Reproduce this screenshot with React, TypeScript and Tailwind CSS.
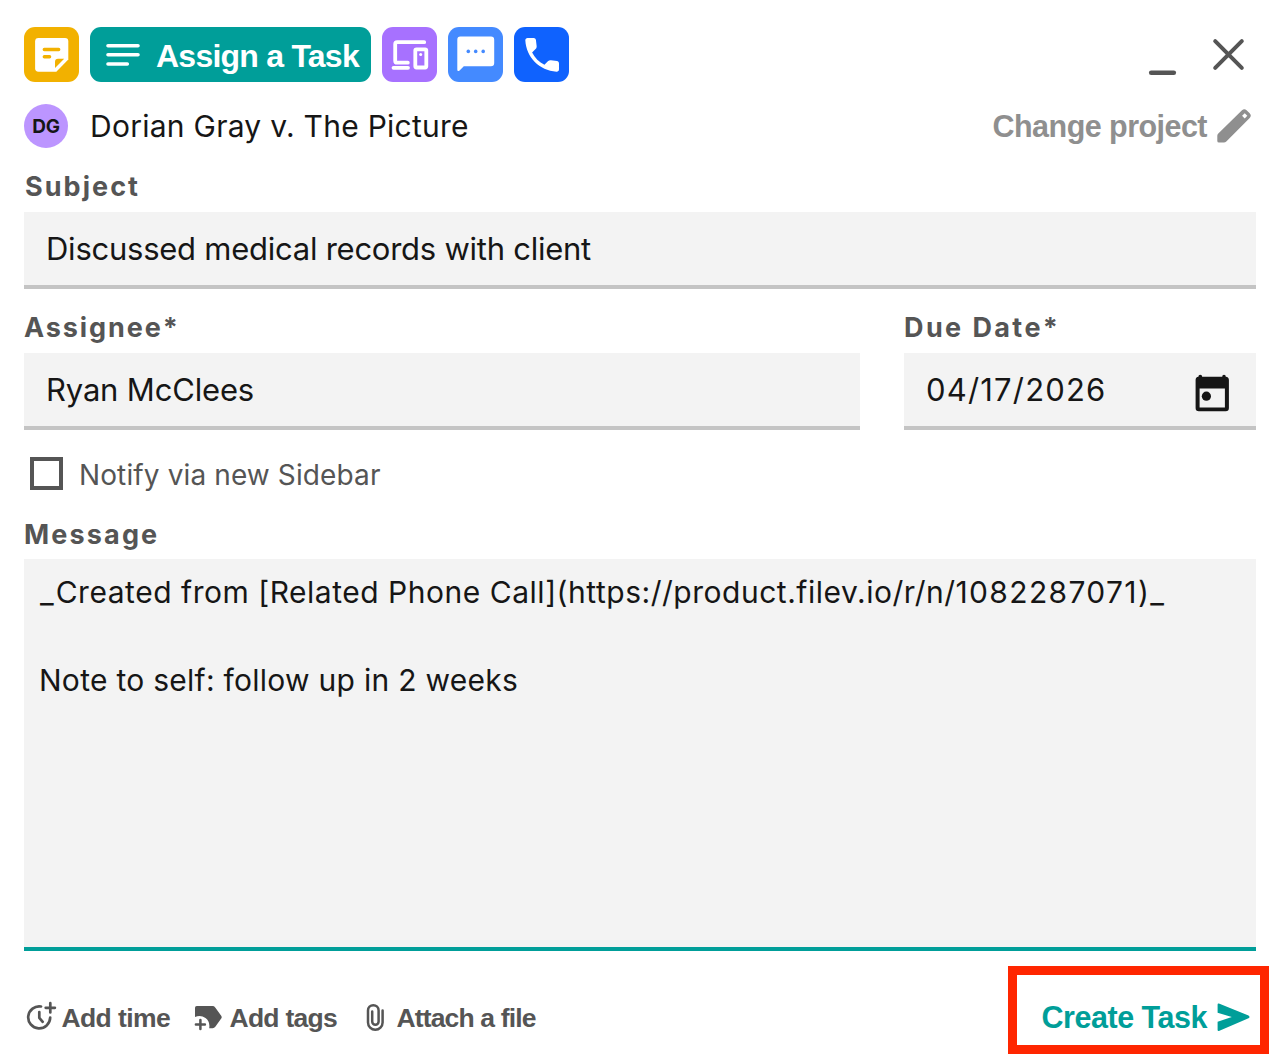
import React from 'react';

function NoteIcon() {
  return (
    <svg width="55" height="55" viewBox="0 0 55 55" fill="none">
      <path d="M14.5 11H41q3.3 0 3.3 3.3V32.5L32.3 44.7H14.5q-3.4 0-3.4-3.4V14.4q0-3.4 3.4-3.4Z" fill="#fff" />
      <path d="M20.3 22.5H34.7M20.3 29.8H25.6" stroke="#f2b100" strokeWidth="3.4" strokeLinecap="round" />
      <path d="M34 31.8H40.2L31 41V34.8q0-3 3-3Z" fill="#f2b100" />
    </svg>
  );
}

function DevicesIcon() {
  return (
    <svg width="55" height="55" viewBox="0 0 55 55" fill="none" stroke="#fff" strokeWidth="3.8" strokeLinecap="round" strokeLinejoin="round">
      <path d="M42.2 15.2H15.2q-2 0-2 2V33.7q0 2 2 2H25.8M11.5 40.8H26" />
      <rect x="33.3" y="22.3" width="11" height="18.2" rx="1.2" />
      <circle cx="38.7" cy="27.4" r="1.5" fill="#fff" stroke="none" />
    </svg>
  );
}

function ChatIcon() {
  return (
    <svg width="55" height="55" viewBox="0 0 55 55">
      <path d="M12.3 9.5H43q3.2 0 3.2 3.2V36q0 3.2-3.2 3.2H15.8L11.6 43.4q-2.3 1.8-2.3-1V12.7q0-3.2 3-3.2Z" fill="#fff" />
      <g fill="#448aff">
        <circle cx="20.3" cy="24.4" r="1.8" />
        <circle cx="27.7" cy="24.4" r="1.8" />
        <circle cx="35.2" cy="24.4" r="1.8" />
      </g>
    </svg>
  );
}

function PhoneIcon() {
  return (
    <svg width="55" height="55" viewBox="0 0 55 55">
      <path
        transform="translate(5.7 5.4) scale(1.872)"
        fill="#fff"
        d="M19.9 15.26l-3.2-.36c-.61-.07-1.21.14-1.64.57l-1.84 1.84c-2.83-1.44-5.15-3.75-6.59-6.59l1.85-1.85c.43-.43.64-1.03.57-1.64l-.38-3.2c-.1-.6-.6-1.03-1.2-1.03H4.2c-.7 0-1.25.55-1.2 1.25.53 9.2 7.5 16.2 16.7 16.75.7.05 1.28-.5 1.28-1.2v-3.3c.01-.65-.45-1.17-1.08-1.24z"
      />
    </svg>
  );
}

function Label({ children, className }: { children: React.ReactNode; className: string }) {
  return <div className={`h-[30px] pt-px text-[27px] leading-[30px] font-bold text-[#555] ${className}`}>{children}</div>;
}

function Field({ children, className }: { children: React.ReactNode; className: string }) {
  return (
    <div className={`flex h-[77px] items-center border-b-4 border-[#c4c4c4] bg-[#f3f3f3] text-[31px] leading-[44px] pl-[22px] ${className}`}>
      {children}
    </div>
  );
}

export default function App() {
  return (
    <div className="relative flex h-[1059px] w-[1278px] flex-col overflow-hidden bg-white pt-[27px] pr-[22px] pl-6 font-['Inter','Liberation_Sans',sans-serif] whitespace-nowrap text-[#161616]">
      <header className="flex h-[55px] gap-[11px]">
        <button className="size-[55px] rounded-[11px] bg-[#f2b100]"><NoteIcon /></button>
        <button className="flex w-[281px] items-center rounded-[11px] bg-[#009e99] pl-4 font-['Liberation_Sans',sans-serif] text-[32px] leading-[44px] font-bold tracking-[-0.76px] text-white">
          <svg width="50" height="55" viewBox="16 0 50 55" stroke="#fff" strokeWidth="3.6" strokeLinecap="round">
            <path d="M18 18.8H48M18 27.8H48M18 37H37.3" />
          </svg>
          <span className="pt-[3px]">Assign a Task</span>
        </button>
        <button className="size-[55px] rounded-[11px] bg-[#a771ff]"><DevicesIcon /></button>
        <button className="size-[55px] rounded-[11px] bg-[#448aff]"><ChatIcon /></button>
        <button className="size-[55px] rounded-[11px] bg-[#0f62fe]"><PhoneIcon /></button>
        <svg className="ml-auto" width="108" height="55" viewBox="1148 27 108 55" stroke="#555" strokeLinecap="round">
          <path d="M1151.2 72.7H1173.8" strokeWidth="4.6" />
          <path d="M1215.2 41.2L1241.8 67.8M1241.8 41.2L1215.2 67.8" strokeWidth="4" />
        </svg>
      </header>

      <div className="mt-[22px] flex h-11 items-center leading-[44px]">
        <div className="flex size-11 items-center justify-center rounded-full bg-[#bc95ff] pt-[2px] text-[19px] font-bold tracking-[-0.3px]">DG</div>
        <div className="ml-[22px] text-[30px] tracking-[0.26px]">Dorian Gray v. The Picture</div>
        <button className="ml-auto flex items-center pr-[5px] font-['Liberation_Sans',sans-serif] text-[30.5px] font-bold tracking-[-0.54px] text-[#8f8f8f]">
          <span className="pb-px">Change project</span>
          <svg className="ml-[10px]" width="34" height="34" viewBox="0 0 34 34">
            <path d="M.3 26.8q0-1.4 1-2.4L25 1.2q2.3-2 4.6 0L32.7 4.3q2.2 2.3 0 4.6L9.3 32.6q-1 1-2.4 1H2q-1.7 0-1.7-1.7Z" fill="#8f8f8f" />
            <path d="M27.7 4.2L30.3 6.8 27.7 9.4 25.1 6.8Z" fill="#fff" />
          </svg>
        </button>
      </div>

      <Label className="mt-[23px] pl-px tracking-[2.05px]">Subject</Label>
      <Field className="mt-[11px] tracking-[-0.25px]">Discussed medical records with client</Field>

      <div className="mt-[23px] flex gap-11">
        <div className="w-[836px]">
          <Label className="tracking-[1.9px]">Assignee*</Label>
          <Field className="mt-[11px] tracking-[-0.17px]">Ryan McClees</Field>
        </div>
        <div className="w-[352px]">
          <Label className="tracking-[2.4px]">Due Date*</Label>
          <Field className="mt-[11px] justify-between pr-[26px] tracking-[1.18px]">
            04/17/2026
            <svg className="mt-[7px]" width="35" height="38" viewBox="1195 374.5 35 38">
              <path d="M1200.2 375.3q2 0 2 2H1222.200q0-2 1.8-2t1.800 2q3.1.4 3.100 3.200V408.500q0 3.200-3.200 3.200H1198.800q-3.200 0-3.200-3.200V380.500q0-2.800 2.800-3.200 0-2 1.800-2ZM1199.600 389V407.900H1224.900V389Z" fillRule="evenodd" fill="#161616" />
              <circle cx="1206.400" cy="396.700" r="4.600" fill="#161616" />
            </svg>
          </Field>
        </div>
      </div>

      <div className="mt-[27px] flex h-[33px] items-center pl-[6px]">
        <div className="size-[33px] border-4 border-[#555]" />
        <div className="ml-4 pt-[3px] text-[28px] leading-[30px] tracking-[0.12px] text-[#555]">Notify via new Sidebar</div>
      </div>

      <Label className="mt-[29px] tracking-[2.15px]">Message</Label>
      <div className="mt-[10px] h-[392px] border-b-4 border-[#009e99] bg-[#f3f3f3] pt-[11px] text-[30px] leading-[44px]">
        <p className="pl-4 tracking-[0.52px]">
          <span className="tracking-[2px]">_</span>Created from [Related Phone Call](https://product.filev.io/r/n/<span className="tracking-[1.35px]">1082287071)_</span>
        </p>
        <p className="mt-11 pl-[15px] tracking-[0.27px]">Note to self: follow up in 2 weeks</p>
      </div>

      <footer className="mt-[44px] flex h-11 items-center font-['Liberation_Sans',sans-serif] text-[26.5px] leading-[44px] font-bold text-[#555]">
        <button className="flex w-[168px] items-center tracking-[-0.6px]">
          <svg width="37.5" height="44" viewBox="24 995 37.5 44" fill="none" stroke="#555" strokeWidth="2.700" strokeLinecap="round" strokeLinejoin="round">
            <path d="M41 1006.500A11 11 0 1 0 50.200 1017.500M39.300 1012V1017.800L42.700 1021.800M50.300 1003.200V1012.400M45.700 1007.800H54.900" />
          </svg>
          <span className="pt-[2px]">Add time</span>
        </button>
        <button className="flex w-[171px] items-center tracking-[-0.73px]">
          <svg width="37.5" height="44" viewBox="192 995 37.5 44">
            <path d="M196.700 1006H212.500q1.700 0 2.700 1.400L221.200 1015.800q1 1.400 0 2.800L215.300 1026.800q-1 1.400-2.700 1.400H209.200Q210.300 1021.500 205.500 1018 200.700 1014.800 195 1017V1007.700q0-1.700 1.700-1.700Z" fill="#555" />
            <path d="M200.400 1020V1029M195.900 1024.500H204.900" stroke="#555" strokeWidth="2.500" strokeLinecap="round" />
          </svg>
          <span className="pt-[2px]">Add tags</span>
        </button>
        <button className="flex items-center tracking-[-0.85px]">
          <svg width="33.5" height="44" viewBox="363 995 33.5 44" fill="none" stroke="#555" strokeWidth="2.500" strokeLinecap="round">
            <path d="M382.600 1010.500V1022.500A7.300 7.300 0 0 1 368 1022.500V1010.500A5.300 5.300 0 0 1 378.600 1010.500V1021.500A3.200 3.200 0 0 1 372.200 1021.500V1011.500" />
          </svg>
          <span className="pt-[2px]">Attach a file</span>
        </button>
        <button className="ml-auto flex items-center pr-[6px] text-[30.5px] tracking-[-0.47px] text-[#009e99]">
          <span className="pb-px">Create Task</span>
          <svg className="ml-[10px]" width="33" height="30" viewBox="1217 1002 33 30">
            <path d="M1218.900 1003.500L1248.500 1015.600q2 1.300 0 2.700L1218.900 1030.900q-1.300.2-1.300-1V1021.800L1231.800 1017 1217.600 1012.700V1004.500q0-1.300 1.300-1Z" fill="#009e99" />
          </svg>
        </button>
      </footer>

      <div className="pointer-events-none absolute top-[966px] left-[1008px] h-[88px] w-[261px] border-[9px] border-[#ff2600]" />
    </div>
  );
}
